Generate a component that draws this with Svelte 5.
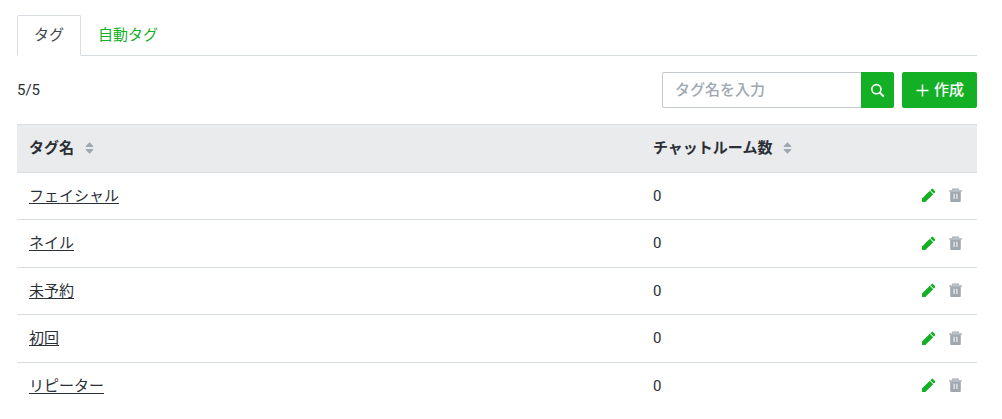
<script>
  let tags = $state([
    { name: 'フェイシャル', rooms: 0 },
    { name: 'ネイル', rooms: 0 },
    { name: '未予約', rooms: 0 },
    { name: '初回', rooms: 0 },
    { name: 'リピーター', rooms: 0 }
  ]);
  const limit = 5;
  let keyword = $state('');

  function sortBy(key) {
    tags.sort((a, b) => (a[key] > b[key] ? 1 : a[key] < b[key] ? -1 : 0));
  }

  function remove(tag) {
    tags = tags.filter((t) => t !== tag);
  }
</script>

{#snippet sortIcon()}
  <svg width="9" height="12" viewBox="0 0 9 12" aria-hidden="true">
    <path d="M4.5 0.3 L8.2 4 V5 H0.8 V4 Z M0.8 7 H8.2 V8 L4.5 11.7 L0.8 8 Z" fill="#a0a8b1" />
  </svg>
{/snippet}

<main>
  <nav>
    <a href="#tags" class="active" aria-current="page">タグ</a>
    <a href="#auto">自動タグ</a>
  </nav>

  <div class="toolbar">
    <span>{tags.length}/{limit}</span>
    <form onsubmit={(e) => e.preventDefault()}>
      <input type="text" aria-label="タグ名" placeholder="タグ名を入力" bind:value={keyword} />
      <button class="search" aria-label="検索">
        <svg width="15" height="15" viewBox="0 0 15 15" fill="none" stroke="#fff" aria-hidden="true">
          <circle cx="6.4" cy="6.2" r="4.6" stroke-width="1.6" />
          <path d="M9.7 9.5 L13.8 13.6" stroke-width="2" />
        </svg>
      </button>
    </form>
    <button class="create">
      <svg width="13" height="13" viewBox="0 0 13 13" stroke="#fff" stroke-width="1.5" aria-hidden="true">
        <path d="M6.5 0.5 V12.5 M0.5 6.5 H12.5" />
      </svg>
      作成
    </button>
  </div>

  <table>
    <thead>
      <tr>
        <th class="name">
          <button class="sort" onclick={() => sortBy('name')}>タグ名 {@render sortIcon()}</button>
        </th>
        <th>
          <button class="sort" onclick={() => sortBy('rooms')}>チャットルーム数 {@render sortIcon()}</button>
        </th>
        <th class="tools"></th>
      </tr>
    </thead>
    <tbody>
      {#each tags as tag}
        <tr>
          <td><a href="#tag">{tag.name}</a></td>
          <td>{tag.rooms}</td>
          <td>
            <div class="actions">
              <button class="edit" aria-label="編集">
                <svg width="15" height="15" viewBox="0 0 15 15" fill="currentColor" aria-hidden="true">
                  <path d="M1 14 V10.6 L8.8 2.8 L12.2 6.2 L4.4 14 Z" />
                  <path d="M9.4 2.2 L10.6 1.1 Q11.3 0.5 12 1.1 L13.9 3 Q14.5 3.7 13.9 4.4 L12.8 5.6 Z" />
                </svg>
              </button>
              <button class="delete" aria-label="削除" onclick={() => remove(tag)}>
                <svg width="15" height="15" viewBox="0 0 15 15" fill="none" aria-hidden="true">
                  <path d="M4.8 2.5 V1.1 H10.2 V2.5" stroke="currentColor" stroke-width="1.2" />
                  <path d="M1.2 2.3 H13.8 V3.7 H1.2 Z" fill="currentColor" />
                  <path d="M2.2 3.7 H12.8 V13 Q12.8 14 11.8 14 H3.2 Q2.2 14 2.2 13 Z" fill="currentColor" />
                  <path d="M6.1 5.7 V11 M8.9 5.7 V11" stroke="#fff" stroke-width="1" />
                </svg>
              </button>
            </div>
          </td>
        </tr>
      {/each}
    </tbody>
  </table>
</main>

<style>
  :global(body) {
    background: #fff;
  }
  main {
    padding: 15px 25px 0 17px;
    font-family: Roboto, 'Noto Sans CJK JP', sans-serif;
    font-size: 15px;
    line-height: 1.5;
    color: #2b2f36;
  }
  button,
  input {
    font: inherit;
    box-sizing: border-box;
    margin: 0;
  }
  button {
    border: 0;
    padding: 0;
    background: none;
    color: inherit;
    cursor: pointer;
  }
  svg {
    display: block;
  }

  nav {
    display: flex;
    line-height: 23px;
    border-bottom: 1px solid #d8dde1;
  }
  nav a {
    padding: 8px 16px;
    margin-bottom: -1px;
    border: 1px solid transparent;
    border-radius: 2px 2px 0 0;
    color: #13b025;
    text-decoration: none;
  }
  nav a.active {
    color: #3f454d;
    background: #fff;
    border-color: #d8dde1 #d8dde1 #fff;
  }

  .toolbar {
    display: flex;
    align-items: center;
    gap: 8px;
    padding: 16px 0;
  }
  .toolbar span {
    margin-right: auto;
  }
  form {
    display: flex;
  }
  input {
    width: 199px;
    height: 36px;
    padding: 0 12px;
    border: 1px solid #c5cad1;
    border-right: 0;
    border-radius: 2px 0 0 2px;
    color: inherit;
  }
  input::placeholder {
    color: #a0a8b1;
    font-weight: 500;
    opacity: 1;
  }
  .search,
  .create {
    display: flex;
    align-items: center;
    justify-content: center;
    height: 36px;
    background: #13b025;
    color: #fff;
  }
  .search {
    width: 33px;
    border-radius: 0 2px 2px 0;
  }
  .create {
    gap: 5px;
    padding: 0 13px 0 14px;
    border-radius: 2px;
    font-weight: 500;
  }

  table {
    width: 100%;
    border-collapse: separate;
    border-spacing: 0;
    table-layout: fixed;
  }
  th,
  td {
    padding: 12px;
    text-align: left;
    border-bottom: 1px solid #d8dde1;
  }
  th {
    background: #e9ebed;
    border-top: 1px solid #d8dde1;
  }
  tbody tr:last-child td {
    border-bottom: 0;
  }
  .name {
    width: 65%;
    box-sizing: border-box;
  }
  .tools {
    width: 100px;
    box-sizing: border-box;
  }
  td a {
    color: inherit;
    text-underline-offset: 2px;
  }
  .sort {
    display: flex;
    align-items: center;
    gap: 11px;
    font-weight: 700;
  }
  .actions {
    display: flex;
    justify-content: flex-end;
    gap: 8px;
  }
  .actions button {
    padding: 2px;
  }
  .edit {
    color: #13b025;
  }
  .delete {
    color: #a0a8b1;
  }
</style>
